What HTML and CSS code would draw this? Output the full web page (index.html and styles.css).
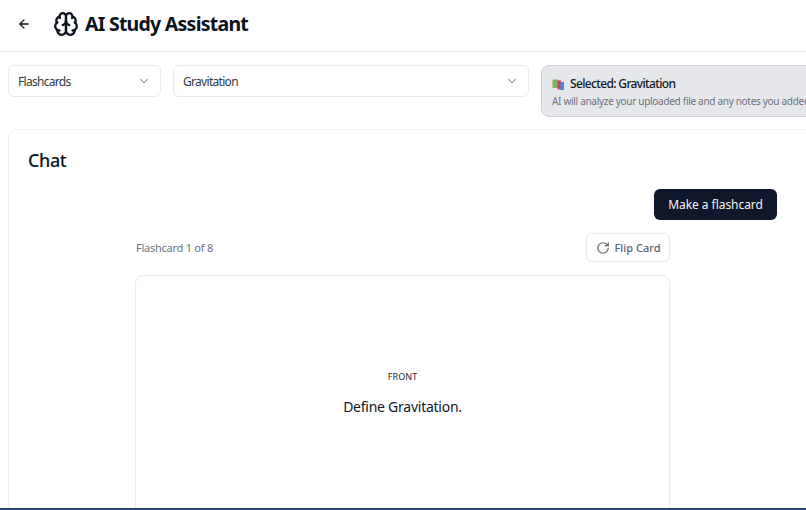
FILE: index.html
```html
<!DOCTYPE html>
<html lang="en">
<head>
<meta charset="utf-8">
<title>AI Study Assistant</title>
<link rel="stylesheet" href="styles.css">
</head>
<body>
<header class="topbar">
  <button class="back" aria-label="Back">
    <svg width="14" height="14" viewBox="0 0 24 24" fill="none" stroke="currentColor" stroke-width="2.2" stroke-linecap="round" stroke-linejoin="round"><path d="m12 19-7-7 7-7"/><path d="M19 12H5"/></svg>
  </button>
  <svg class="brain" width="26" height="26" viewBox="0 0 24 24" fill="none" stroke="currentColor" stroke-width="2.1" stroke-linecap="round" stroke-linejoin="round"><path d="M12 5a3 3 0 1 0-5.997.125 4 4 0 0 0-2.526 5.77 4 4 0 0 0 .556 6.588A4 4 0 1 0 12 18Z"/><path d="M12 5a3 3 0 1 1 5.997.125 4 4 0 0 1 2.526 5.77 4 4 0 0 1-.556 6.588A4 4 0 1 1 12 18Z"/><path d="M15 13a4.5 4.5 0 0 1-3-4 4.5 4.5 0 0 1-3 4"/><path d="M17.599 6.5a3 3 0 0 0 .399-1.375"/><path d="M6.003 5.125A3 3 0 0 0 6.401 6.5"/><path d="M3.477 10.896a4 4 0 0 1 .585-.396"/><path d="M19.938 10.5a4 4 0 0 1 .585.396"/><path d="M6 18a4 4 0 0 1-1.967-.516"/><path d="M19.967 17.484A4 4 0 0 1 18 18"/></svg>
  <h1 class="title">AI Study Assistant</h1>
</header>
<section class="controls">
  <div class="select mode"><span>Flashcards</span><svg class="chev" width="14" height="14" viewBox="0 0 24 24" fill="none" stroke="currentColor" stroke-width="1.8" stroke-linecap="round" stroke-linejoin="round"><path d="m6 9 6 6 6-6"/></svg></div>
  <div class="select topic"><span>Gravitation</span><svg class="chev" width="14" height="14" viewBox="0 0 24 24" fill="none" stroke="currentColor" stroke-width="1.8" stroke-linecap="round" stroke-linejoin="round"><path d="m6 9 6 6 6-6"/></svg></div>
  <div class="selected">
    <div class="sel-title"><svg width="13" height="13" viewBox="0 0 13 13"><rect x="0.500" y="1.500" width="6" height="8.500" rx="0.500" fill="#86b35f"/><rect x="5.500" y="2.500" width="3.500" height="9" fill="#c8406e"/><rect x="8.500" y="4" width="3.500" height="8" fill="#3d8fd6"/></svg><span>Selected: Gravitation</span></div>
    <div class="sel-sub">AI will analyze your uploaded file and any notes you added</div>
  </div>
</section>
<main class="chat">
  <h2 class="chat-title">Chat</h2>
  <div class="action-row"><button class="primary">Make a flashcard</button></div>
  <div class="deck">
    <div class="deck-head">
      <span class="count">Flashcard 1 of 8</span>
      <button class="flip"><svg width="14" height="14" viewBox="0 0 24 24" fill="none" stroke="currentColor" stroke-width="2" stroke-linecap="round" stroke-linejoin="round"><path d="M21 12a9 9 0 1 1-9-9c2.520 0 4.930 1 6.740 2.740L21 8"/><path d="M21 3v5h-5"/></svg>Flip Card</button>
    </div>
    <div class="card">
      <div class="side">FRONT</div>
      <div class="question">Define Gravitation.</div>
    </div>
  </div>
</main>
<div class="taskbar"></div>
</body>
</html>
```

FILE: styles.css
```css
* { box-sizing: border-box; }
html, body { margin: 0; height: 510px; overflow: hidden; }
body { background: #fff; font-family: "Noto Sans", "Open Sans", sans-serif; color: #0b1220; position: relative; }
button { font-family: inherit; }

.topbar { height: 52px; border-bottom: 1px solid #e8eaee; display: flex; align-items: center; padding: 0 0 4px 17px; }
.back { width: 14px; height: 14px; padding: 0; border: 0; background: none; color: #0b1220; display: flex; margin-right: 22px; }
.brain { margin-right: 6px; color: #0b1220; }
.title { margin: 0; font-size: 19.5px; font-weight: 700; line-height: 28px; letter-spacing: -0.75px; }

.controls { display: flex; gap: 12px; align-items: flex-start; padding: 13px 0 0 8px; width: 830px; }
.select { height: 32px; border: 1px solid #e8eaee; border-radius: 6px; display: flex; align-items: center; justify-content: space-between; padding: 0 9px; font-size: 12px; letter-spacing: -0.7px; color: #333b48; background: #fff; flex: none; }
.mode { width: 153px; }
.topic { width: 356px; }
.chev { color: #7f8791; }
.selected { flex: none; width: 280px; height: 52px; background: #e6e7ea; border: 1px solid #cfd2d7; border-radius: 8px; padding: 10px; }
.sel-title { display: flex; align-items: center; gap: 5px; font-size: 12px; line-height: 16px; font-weight: 500; letter-spacing: -0.65px; color: #111827; }
.sel-sub { font-size: 10px; line-height: 14px; margin-top: 2px; letter-spacing: -0.3px; color: #6b7280; white-space: nowrap; }

.chat { width: 830px; margin: 12px 0 0 8px; border: 1px solid #eef0f2; border-radius: 8px; padding: 18px 60px 19px 19px; height: 400px; }
.chat-title { margin: 0; font-size: 18px; line-height: 24px; font-weight: 500; letter-spacing: -0.4px; color: #0b1220; }
.action-row { display: flex; justify-content: flex-end; margin-top: 17px; }
.primary { width: 123px; height: 31px; background: #0f172a; color: #f3f4f6; border: 0; border-radius: 6px; font-size: 12px; letter-spacing: -0.05px; padding: 0; }
.deck { width: 535px; margin: 13px auto 0; }
.deck-head { display: flex; justify-content: space-between; align-items: center; height: 29px; }
.count { font-size: 11px; letter-spacing: -0.25px; color: #6b7280; margin-left: 1px; }
.flip { width: 84px; height: 29px; background: #fff; border: 1px solid #e8eaee; border-radius: 6px; color: #5b6472; font-size: 11px; font-weight: 500; display: flex; align-items: center; justify-content: center; gap: 5px; padding: 0; }
.card { margin-top: 13px; height: 320px; border: 1px solid #e8eaee; border-radius: 8px; padding-top: 94px; text-align: center; }
.side { font-size: 9px; line-height: 14px; letter-spacing: 0.05px; color: #1f2937; }
.question { font-size: 14px; line-height: 20px; margin-top: 13px; letter-spacing: -0.25px; color: #111827; }

.taskbar { position: absolute; left: 0; right: 0; bottom: 0; height: 2px; background: #264a73; }
```
